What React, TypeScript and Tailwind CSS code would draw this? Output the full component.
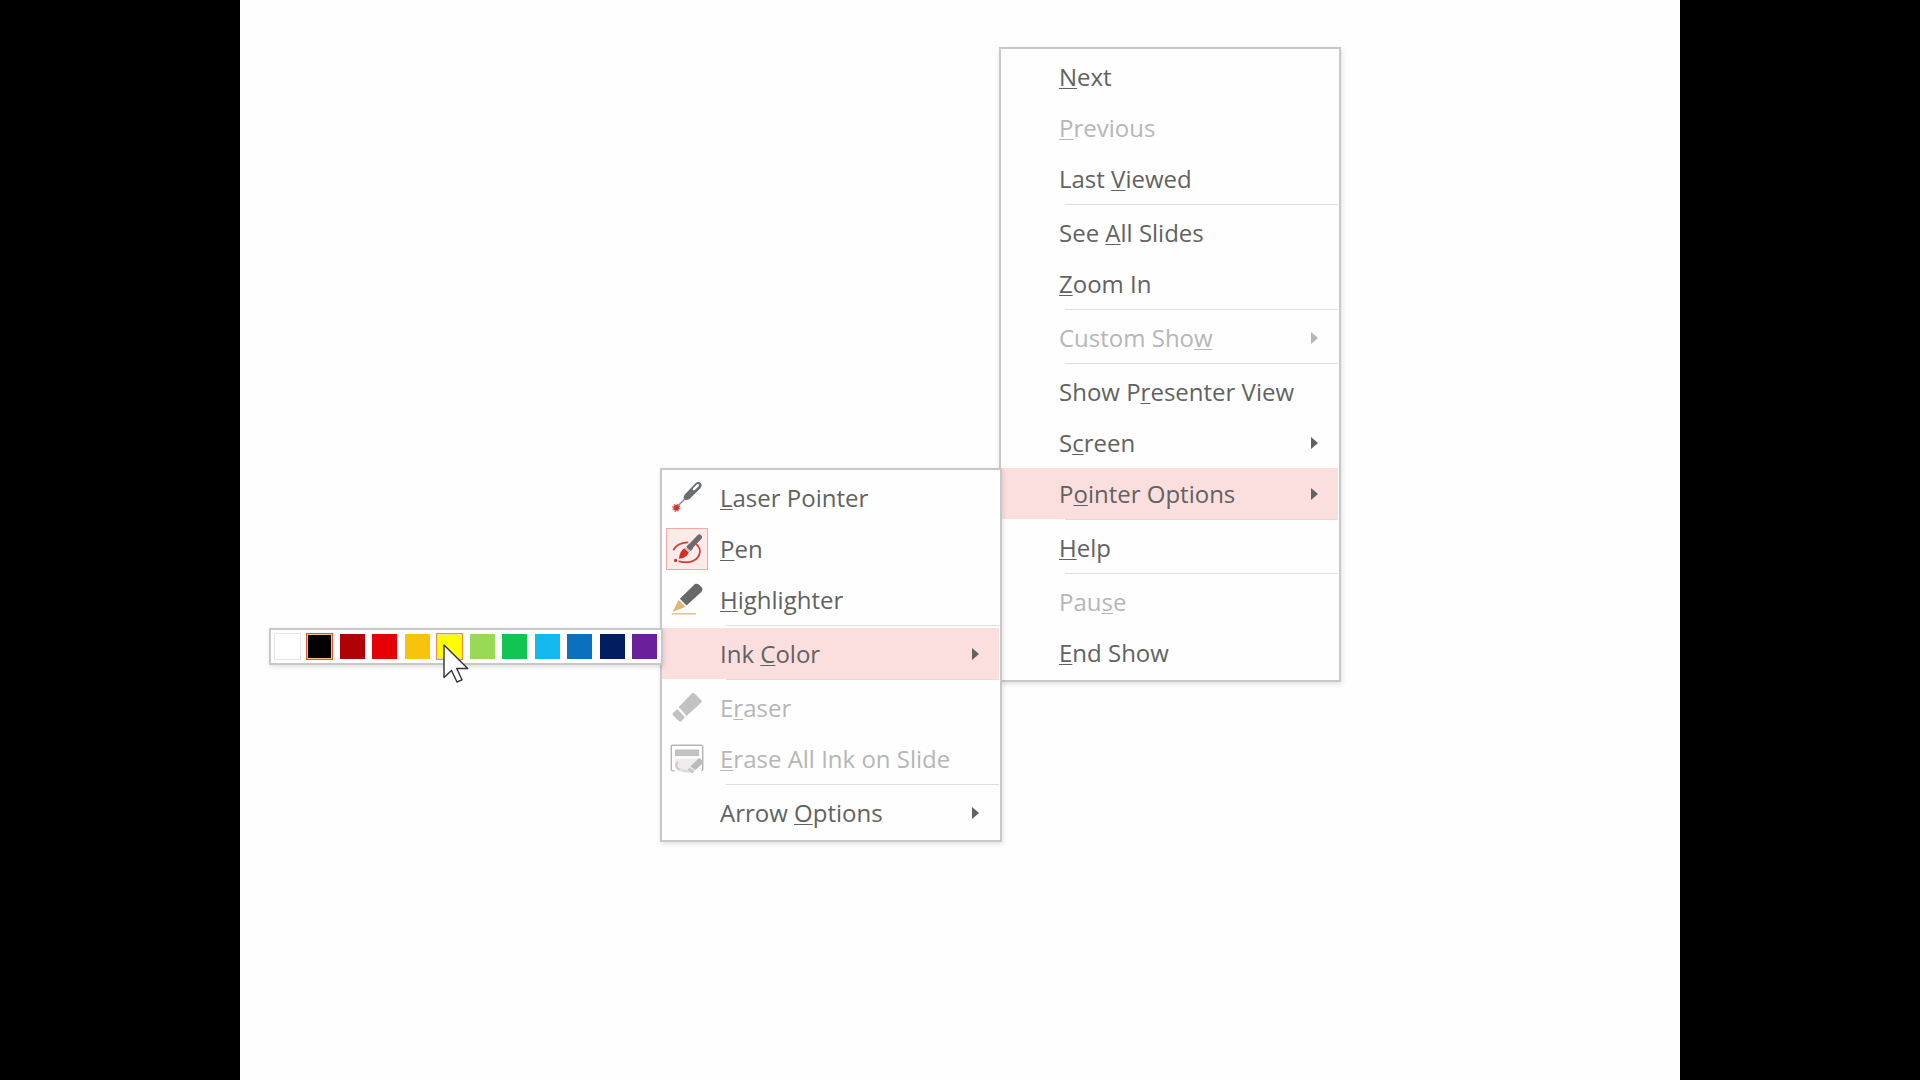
import type { ReactNode } from "react";

type Item = {
  label: string;
  accessKey: number;
  disabled?: boolean;
  active?: boolean;
  checked?: boolean;
  arrow?: boolean;
  icon?: ReactNode;
  submenu?: ReactNode;
};

const LaserIcon = () => (
  <svg viewBox="0 0 42 42" className="size-full" fill="none" aria-hidden="true">
    <path d="M11 30 20 20.5" stroke="#8a8f93" strokeWidth="1.6" />
    <path d="m18.4 17.6 11-11.6c2-2 4.6-2.2 6-.8 1.500 1.400 1.200 3.800-.6 5.800L23.400 22.200l-3.600 1.200-2.600-2.400z" fill="#6a6e71" />
    <path d="m28.300 11.700 4-4" stroke="#fff" strokeWidth="2.600" strokeLinecap="round" />
    <circle cx="9.700" cy="31.300" r="3" fill="#c9382e" />
    <circle cx="9.700" cy="31.300" r="3.700" stroke="#d9635a" strokeWidth="1.500" strokeDasharray="1.500 1.400" />
  </svg>
);

const PenIcon = () => (
  <svg viewBox="0 0 42 42" className="size-full" fill="none" aria-hidden="true">
    <path d="M7 21.500c2.500-4.500 8-7 14.500-7.500M29.500 15c4.500 3 6.500 8 4 13-3 6-11.500 8.500-20.500 6" stroke="#cb4339" strokeWidth="2" strokeLinecap="round" />
    <path d="M24 19 34 8.500" stroke="#6f6a6d" strokeWidth="5.500" strokeLinecap="round" />
    <path d="m20.300 18.300 2.600-2.300 4.600 4.600-2.700 2.500z" fill="#6f6a6d" />
    <path d="m19.300 19.300 4.500 4.500" stroke="#c9b9b9" strokeWidth="1.500" />
    <path d="m18.200 20.300 4.600 4.500c-1.800 4.200-5.300 6.200-10.300 6.500.500-5 2.200-8.800 5.700-11z" fill="#cf3027" />
    <circle cx="9" cy="33" r="1.700" fill="#cf3027" />
  </svg>
);

const HighlighterIcon = () => (
  <svg viewBox="0 0 42 42" className="size-full" fill="none" aria-hidden="true">
    <path d="M13.500 19.800 28 5.400c1.500-1.600 3.600-1.900 5.200-.9l3.200 3.200c1.300 1.600 1 3.500-.4 4.900L20.500 26.800z" fill="#66696b" />
    <path d="m12.400 21 6.900 6.900-2.800 1.400L6 33.300l4.800-9.600z" fill="#e3b377" />
    <path d="M5 35.500h25.500" stroke="#e5bd8a" strokeWidth="1.500" />
  </svg>
);

const EraserIcon = () => (
  <svg viewBox="0 0 42 42" className="size-full" aria-hidden="true">
    <path d="M12.300 20 26.300 5.500q1.200-1 2.400 0l7.300 7.300q1 1.200 0 2.400L20.500 29.300z" fill="#c2c2c2" />
    <path d="m10.700 22 8.200 8.700-4 4.300q-1.100 1-2.200 0l-6.400-6.500q-1-1.100 0-2.200z" fill="#c2c2c2" />
  </svg>
);

const EraseAllIcon = () => (
  <svg viewBox="0 0 42 42" className="size-full" fill="none" aria-hidden="true">
    <path d="M8 33.500H6q-1.500 0-1.500-1.500V8Q4.500 6.500 6 6.500h30q1.500 0 1.500 1.500v24q0 1.500-1.500 1.500" stroke="#b5b5b5" strokeWidth="1.500" />
    <path d="M8.300 20.500h25.400v8L28 34H13l-4.700-5z" fill="#efebef" />
    <path d="M8.300 11h25.400v7H8.300z" fill="#c2c2c2" />
    <path d="M11.500 24c-3 3-2 7 2 8.500" stroke="#cfcccf" strokeWidth="2.500" />
    <path d="M14 30.500c4 2.500 8 2.500 11 1.500l2 3c-5 1-10 0-13-2z" fill="#dedade" />
    <path d="m24.500 29 8.500-8.500q1-.8 2 0l2.500 3q.8 1 0 2L30 32.500z" fill="#bdbabd" />
    <path d="m23.500 30 5.300 3.700-2 2.500-5-4z" fill="#c9c6c9" />
  </svg>
);

function Label({ text, accessKey }: { text: string; accessKey: number }) {
  return (
    <span className="flex-1 text-left whitespace-pre">
      {text.slice(0, accessKey)}
      <span className="underline decoration-1 underline-offset-2 [text-decoration-skip-ink:none]">{text[accessKey]}</span>
      {text.slice(accessKey + 1)}
    </span>
  );
}

function MenuRow({ item }: { item: Item }) {
  const tone = item.disabled ? "text-[#b6b6b6]" : "text-[#626262]";
  const back = item.active ? "bg-[#fbdfde]" : "";
  const frame = item.checked ? "border-[#f3ab9f] bg-[#fdebea]" : "border-transparent";
  return (
    <li role="none" className="relative">
      <button
        type="button"
        role="menuitem"
        disabled={item.disabled}
        aria-haspopup={item.arrow ? "menu" : undefined}
        className={`flex h-[51px] w-full items-center pl-1 pr-5 ${tone} ${back}`}
      >
        <span className={`mr-3 size-[42px] shrink-0 border ${frame}`}>{item.icon}</span>
        <Label text={item.label} accessKey={item.accessKey} />
        {item.arrow && (
          <svg viewBox="0 0 7 12" className="h-3 w-[7px]" aria-hidden="true">
            <path d="M0 0 7 6 0 12z" fill="currentColor" />
          </svg>
        )}
      </button>
      {item.submenu}
    </li>
  );
}

function Menu({ label, groups, className }: { label: string; groups: Item[][]; className: string }) {
  return (
    <div className={`absolute w-[342px] border-2 border-[#c8c8c8] bg-[#fefefe] py-0.5 pr-px shadow-[1px_2px_5px_rgba(0,0,0,0.12)] ${className}`}>
      <ul role="menu" aria-label={label}>
        {groups.map((group, g) => [
          g > 0 && <li key={`line-${g}`} role="separator" className="ml-16 h-[3px] border-t border-[#dedede]" />,
          ...group.map((item) => <MenuRow key={item.label} item={item} />),
        ])}
      </ul>
    </div>
  );
}

const swatches = [
  { name: "White", style: "bg-white ring-1 ring-[#e6e6e6]" },
  { name: "Black", style: "bg-black border border-[#f3c58c] ring-1 ring-[#e4572c]" },
  { name: "Dark Red", style: "bg-[#ae0206]" },
  { name: "Red", style: "bg-[#e60003]" },
  { name: "Orange", style: "bg-[#f7c30b]" },
  { name: "Yellow", style: "bg-[#ffff00] border border-[#fbe08a] ring-1 ring-[#ef8a55]" },
  { name: "Light Green", style: "bg-[#98da55]" },
  { name: "Green", style: "bg-[#12c452]" },
  { name: "Light Blue", style: "bg-[#12b9ee]" },
  { name: "Blue", style: "bg-[#0b70bd]" },
  { name: "Dark Blue", style: "bg-[#021e5e]" },
  { name: "Purple", style: "bg-[#6a209b]" },
];

function Palette() {
  return (
    <div
      role="group"
      aria-label="Ink Color"
      className="absolute top-0 right-full -mr-px flex w-[394px] justify-between border-2 border-[#c8c8c8] bg-[#fefefe] px-1 py-1 shadow-[1px_2px_5px_rgba(0,0,0,0.12)]"
    >
      {swatches.map((s) => (
        <span key={s.name} className="relative size-[25px]">
          <button type="button" aria-label={s.name} className={`block size-full ${s.style}`} />
          {s.name === "Yellow" && (
            <svg viewBox="0 0 27 40" className="pointer-events-none absolute left-1.5 top-2.5 z-10 h-10 w-[27px]" aria-hidden="true">
              <path d="M1 1v32.500l7.500-7 5.500 11.500 5-2.200-5.300-11.300h11z" fill="#fff" stroke="#33303a" strokeWidth="1.400" strokeLinejoin="round" />
            </svg>
          )}
        </span>
      ))}
    </div>
  );
}

const pointerGroups: Item[][] = [
  [
    { label: "Laser Pointer", accessKey: 0, icon: <LaserIcon /> },
    { label: "Pen", accessKey: 0, checked: true, icon: <PenIcon /> },
    { label: "Highlighter", accessKey: 0, icon: <HighlighterIcon /> },
  ],
  [{ label: "Ink Color", accessKey: 4, active: true, arrow: true, submenu: <Palette /> }],
  [
    { label: "Eraser", accessKey: 1, disabled: true, icon: <EraserIcon /> },
    { label: "Erase All Ink on Slide", accessKey: 0, disabled: true, icon: <EraseAllIcon /> },
  ],
  [{ label: "Arrow Options", accessKey: 6, arrow: true }],
];

const mainGroups: Item[][] = [
  [
    { label: "Next", accessKey: 0 },
    { label: "Previous", accessKey: 0, disabled: true },
    { label: "Last Viewed", accessKey: 5 },
  ],
  [
    { label: "See All Slides", accessKey: 4 },
    { label: "Zoom In", accessKey: 0 },
  ],
  [{ label: "Custom Show", accessKey: 10, disabled: true, arrow: true }],
  [
    { label: "Show Presenter View", accessKey: 6 },
    { label: "Screen", accessKey: 1, arrow: true },
    {
      label: "Pointer Options",
      accessKey: 1,
      active: true,
      arrow: true,
      submenu: <Menu label="Pointer Options" groups={pointerGroups} className="top-0 right-full -mr-px" />,
    },
  ],
  [{ label: "Help", accessKey: 0 }],
  [
    { label: "Pause", accessKey: 3, disabled: true },
    { label: "End Show", accessKey: 0 },
  ],
];

export default function App() {
  return (
    <div className="flex min-h-screen justify-center bg-black font-['Open_Sans',sans-serif] text-2xl">
      <main className="relative w-3/4 bg-[#fefefe]">
        <Menu label="Slide show" groups={mainGroups} className="right-[339px] top-[47px]" />
      </main>
    </div>
  );
}
